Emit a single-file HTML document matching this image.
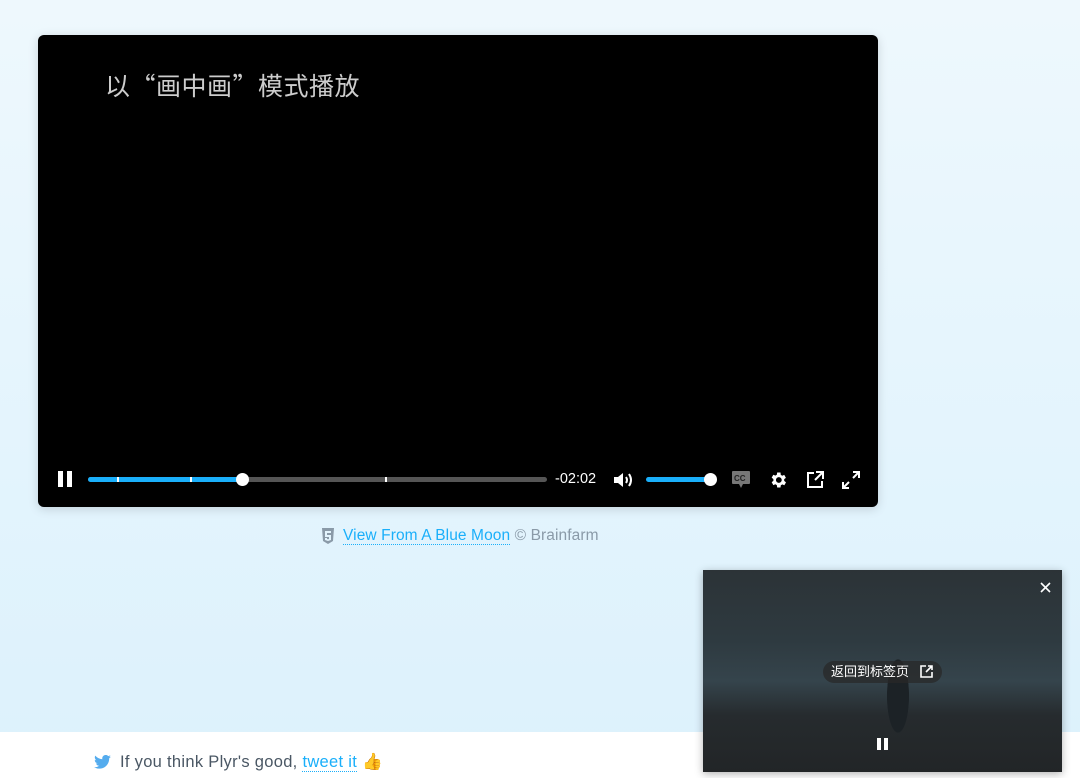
<!DOCTYPE html>
<html><head><meta charset="utf-8"><style>
*{margin:0;padding:0;box-sizing:border-box}
body{width:1080px;height:778px;overflow:hidden;font-family:"Liberation Sans","Noto Sans CJK SC",sans-serif;background:linear-gradient(180deg,#eef8fd 0%,#e3f4fd 60%,#dcf1fc 100%);position:relative}
.foot{position:absolute;left:0;top:732px;width:1080px;height:46px;background:#fff}
.player{position:absolute;left:38px;top:35px;width:840px;height:472px;background:#000;border-radius:6px;box-shadow:0 2px 10px rgba(0,0,0,.15)}
.title{position:absolute;left:67px;top:32px;color:#ccc;font-size:25px;font-family:"Noto Sans CJK SC",sans-serif;letter-spacing:0.5px}
.ab{position:absolute}
.bar{position:absolute;height:5px;top:442px;border-radius:3px}
.cap{position:absolute;top:527px;font-size:15.5px;color:#8a9aa8;letter-spacing:0.1px}
.cap a{color:#1aaffa;text-decoration:none;border-bottom:1px dotted #1aaffa}
.pip{position:absolute;left:703px;top:570px;width:359px;height:202px;background:linear-gradient(180deg,#2c3337 0%,#2e3a40 35%,#35444c 55%,#262b2e 72%,#222527 100%);box-shadow:0 2px 8px rgba(0,0,0,.3)}
</style></head><body>
<div class="foot"></div>
<div class="player">
<div class="title">以“画中画”模式播放</div>
<svg class="ab" style="left:19px;top:435px" width="16" height="18"><rect x="1" y="1" width="5" height="16" fill="#fff"/><rect x="10" y="1" width="5" height="16" fill="#fff"/></svg>
<div class="bar" style="left:50px;width:459px;background:#555"></div>
<div class="bar" style="left:50px;width:155px;background:#1aaffa"></div>
<div class="ab" style="left:79px;top:442px;width:2px;height:5px;background:#fff"></div>
<div class="ab" style="left:152px;top:442px;width:2px;height:5px;background:#fff"></div>
<div class="ab" style="left:347px;top:442px;width:2px;height:5px;background:#fff"></div>
<div class="ab" style="left:198px;top:438px;width:13px;height:13px;border-radius:50%;background:#fff"></div>
<div class="ab" style="left:517px;top:436px;color:#fff;font-size:14.5px">-02:02</div>
<svg class="ab" style="left:575px;top:436px" width="22" height="18" viewBox="0 0 22 18"><path d="M1 6h4l5-4v14l-5-4H1z" fill="#fff"/><path d="M13 6q2 3 0 6M16 3q4 6 0 12" stroke="#fff" stroke-width="2" fill="none"/></svg>
<div class="bar" style="left:608px;width:66px;background:#1aaffa"></div>
<div class="ab" style="left:666px;top:438px;width:13px;height:13px;border-radius:50%;background:#fff"></div>
<svg class="ab" style="left:693px;top:435px" width="20" height="20"><rect x="1" y="1" width="18" height="13" rx="1" fill="#777"/><path d="M8 14l2 4 2-4z" fill="#777"/><text x="3" y="11" font-size="8" font-weight="bold" fill="#222" font-family="Liberation Sans">CC</text></svg>
<svg class="ab" style="left:730px;top:435px" width="20" height="20" viewBox="0 0 24 24"><path fill="#fff" d="M19.4 13a7.6 7.6 0 000-2l2.1-1.6-2-3.5-2.5 1a7 7 0 00-1.7-1L15 3h-4l-.4 2.7a7 7 0 00-1.7 1l-2.5-1-2 3.5L6.5 11a7.6 7.6 0 000 2l-2.1 1.6 2 3.5 2.5-1a7 7 0 001.7 1L11 21h4l.4-2.7a7 7 0 001.7-1l2.5 1 2-3.5zM13 15.5a3.5 3.5 0 110-7 3.5 3.5 0 010 7z"/></svg>
<svg class="ab" style="left:767px;top:435px" width="20" height="20" viewBox="0 0 20 20"><path d="M9 3H3v14h14v-6M11 2h7v7M18 2l-8 8" stroke="#fff" stroke-width="2" fill="none"/></svg>
<svg class="ab" style="left:803px;top:435px" width="20" height="20" viewBox="0 0 20 20"><path d="M12 2h6v6M18 2l-6 6M8 18H2v-6M2 18l6-6" stroke="#fff" stroke-width="2" fill="none"/></svg>
</div>
<svg class="ab" style="left:321px;top:528px" width="14" height="16" viewBox="0 0 14 16"><path d="M1 0h12l-1 13-5 3-5-3z" fill="#8a9aa8"/><path d="M4 3h6v2H6v2h4v5l-3 1-3-1V10h2v1l1 .3 1-.3V9H4z" fill="#e3f4fd"/></svg>
<div class="cap" style="left:343px"><a>View From A Blue Moon</a> © Brainfarm</div>
<div class="pip">
<svg class="ab" style="left:337px;top:12px" width="11" height="11"><path d="M1 1l9 9M10 1l-9 9" stroke="#fff" stroke-width="1.6"/></svg>
<div class="ab" style="left:120px;top:71px;width:130px;height:100px;background:radial-gradient(ellipse 18px 60px at 75px 55px,#1c2226 60%,transparent 62%)"></div>
<div class="ab" style="left:120px;top:91px;width:119px;height:22px;border-radius:11px;background:rgba(40,40,40,.75);color:#fff;font-size:13px;line-height:22px;padding-left:8px">返回到标签页</div>
<svg class="ab" style="left:217px;top:95px" width="13" height="13" viewBox="0 0 13 13"><path d="M6 1H1v11h11V7M8 1h4v4M12 1L6 7" stroke="#fff" stroke-width="1.6" fill="none"/></svg>
<svg class="ab" style="left:174px;top:168px" width="12" height="12"><rect x="0" y="0" width="4" height="12" fill="#fff"/><rect x="7" y="0" width="4" height="12" fill="#fff"/></svg>
</div>
<svg class="ab" style="left:94px;top:755px" width="17" height="14" viewBox="0 0 24 20"><path fill="#55acee" d="M24 2.4a10 10 0 01-2.8.8A5 5 0 0023.3.4a10 10 0 01-3.1 1.2A4.9 4.9 0 0011.8 6 14 14 0 011.7.9a4.9 4.9 0 001.5 6.6 4.9 4.9 0 01-2.2-.6 4.9 4.9 0 003.9 4.9 4.9 4.9 0 01-2.2.1 4.9 4.9 0 004.6 3.4A9.9 9.9 0 010 17.3 14 14 0 007.5 19.5c9.1 0 14-7.5 14-14v-.6A10 10 0 0024 2.4z"/></svg>
<div class="ab" style="left:120px;top:753px;font-size:16.5px;color:#4a5764;letter-spacing:0.3px">If you think Plyr's good, <span style="color:#1aaffa;border-bottom:1px dotted #1aaffa">tweet it</span> 👍</div>
</body></html>
